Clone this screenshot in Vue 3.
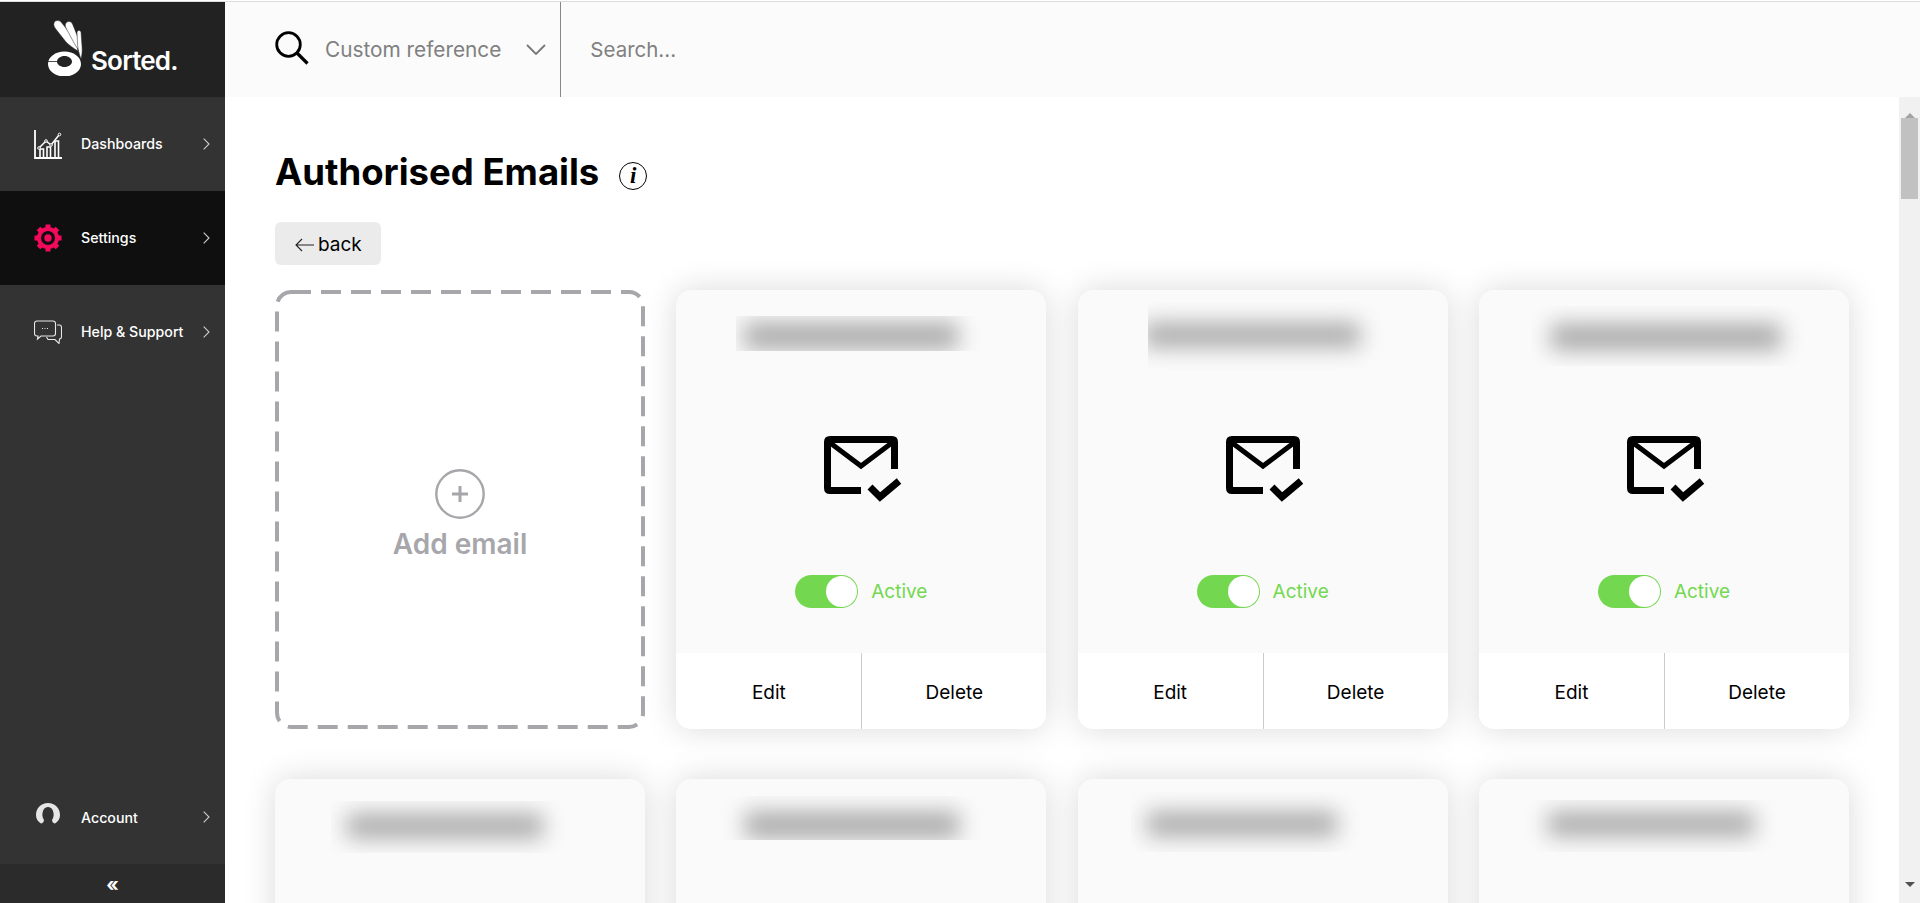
<template>
  <div class="topline"></div>
  <div class="shell">
    <aside class="sidebar">
      <div class="logo">
        <svg class="logo-mark" viewBox="0 0 36 58" width="36" height="58">
          <g fill="#fff" stroke="#222" stroke-width=".5">
            <path d="M6 5C7 2 11 2 13 4L26 20C28 24 29 28 30 33 25 30 21 27 18 24L7 10C6 8 5.500 7 6 5Z" />
            <path d="M18 5C20 3 23 3 24.500 6L31 22C32 26 32.500 30 32.500 34 29 30 27 27 25 23L18 10C17 8 17 6 18 5Z" />
            <path d="M29 14C30 12 32 12 33 14L34 28C34.500 33 34 37 33 41 31 36 30 31 29.500 26Z" />
          </g>
          <path
            d="M16.500 33.500C25.600 33.500 33 39 33 46S25.600 58.500 16.500 58.500 0 53 0 46 7.400 33.500 16.500 33.500ZM16.500 38C12.400 38 9 40.500 9 43.500S12.400 49 16.500 49 24 46.500 24 43.500 20.600 38 16.500 38Z"
            fill="#fff"
            fill-rule="evenodd"
          />
          <path d="M0 43.500h9" stroke="#222" stroke-width=".8" />
        </svg>
        <span class="logo-text">Sorted.</span>
      </div>

      <a v-for="item in navItems" :key="item.label" class="nav-item" :class="{ 'nav-item--active': item.active }">
        <span class="nav-icon">
          <svg v-if="item.icon === 'chart'" viewBox="0 0 28 29" width="28" height="29" fill="none" stroke="#fff">
            <path d="M1 0v28h27" stroke-width="1.800" />
            <path d="M6 27v-8h3.500v8M13 27v-10h3.500v10M21 27V11h3.500v16" stroke-width="1.600" />
            <path d="M5 18l7-7 5 4 8-10" stroke-width="1.500" />
            <circle cx="5" cy="18" r="1.300" fill="#333" />
            <circle cx="12" cy="11" r="1.300" fill="#333" />
            <circle cx="17" cy="15" r="1.300" fill="#333" />
            <circle cx="25.500" cy="4.500" r="1.300" fill="#333" />
          </svg>
          <svg v-else-if="item.icon === 'gear'" viewBox="0 0 28 28" width="28" height="28" fill="none" stroke="#f5095c">
            <circle cx="14" cy="14" r="9" stroke-width="4" />
            <path
              d="M14 0.500v5M14 22.500v5M0.500 14h5M22.500 14h5M4.500 4.500l3.500 3.500M20 20l3.500 3.500M23.500 4.500L20 8M8 20l-3.500 3.500"
              stroke-width="5"
            />
            <circle cx="14" cy="14" r="3.700" fill="#f5095c" stroke="none" />
          </svg>
          <svg v-else-if="item.icon === 'chat'" viewBox="0 0 28 24" width="28" height="24" fill="none" stroke="#e8e8e8" stroke-width="1.100">
            <path d="M3 1h16a2.500 2.500 0 0 1 2.500 2.500v10a2.500 2.500 0 0 1-2.500 2.500H7l-3.500 3 .5-3H3a2.500 2.500 0 0 1-2.500-2.500v-10A2.500 2.500 0 0 1 3 1Z" />
            <path d="M23 5h2.500c1 0 2 1 2 2.500v9c0 1.500-1 2.500-2 2.500l-.5 4.500-4-4h-7l-1.500-2.500" />
            <path d="M8 8.500h1M10.500 8.500h1M13 8.500h1" stroke-width="1.200" />
          </svg>
        </span>
        <span class="nav-label">{{ item.label }}</span>
        <svg class="nav-chevron" viewBox="0 0 7 12" width="7" height="12" fill="none" stroke="#ccc" stroke-width="1.100">
          <path d="M.7.7 6 6 .7 11.300" />
        </svg>
      </a>

      <div class="sidebar-spacer"></div>

      <a class="nav-item nav-item--account">
        <span class="nav-icon">
          <svg class="account-icon" viewBox="0 0 24 21" width="24" height="21">
            <path
              d="M5 20.500C1.500 18.500 0 15.500 0 12 0 5 5 0 12 0s12 5 12 12c0 3.500-1.500 6.500-5 8.500-1.500 0-2.800-1.500-3-3.500 2-3 2-6 1-9-1-3-3-4-5-4S8 5 7 8c-1 3-1 6 1 9-.2 2-1.500 3.500-3 3.500Z"
              fill="#e6e6e6"
            />
          </svg>
        </span>
        <span class="nav-label">Account</span>
        <svg class="nav-chevron" viewBox="0 0 7 12" width="7" height="12" fill="none" stroke="#ccc" stroke-width="1.100">
          <path d="M.7.7 6 6 .7 11.300" />
        </svg>
      </a>
      <div class="collapse">«</div>
    </aside>

    <div class="content">
      <header class="topbar">
        <svg class="search-icon" viewBox="0 0 34 34" width="34" height="34" fill="none" stroke="#000">
          <circle cx="13.500" cy="13.500" r="11.800" stroke-width="2.800" />
          <path d="M22 22 32.500 32.500" stroke-width="3.200" />
        </svg>
        <span class="search-type">Custom reference</span>
        <svg class="search-chevron" viewBox="0 0 20 11" width="20" height="11" fill="none" stroke="#777" stroke-width="1.800">
          <path d="M1 1l9 9 9-9" />
        </svg>
        <input class="search-input" type="text" placeholder="Search..." />
      </header>

      <div class="body">
        <main class="main">
          <div class="title-row">
            <h1>Authorised Emails</h1>
            <span class="info"><i>i</i></span>
          </div>
          <button class="back-btn">
            <svg viewBox="0 0 19 14" width="19" height="14" fill="none" stroke="#222" stroke-width="1.100">
              <path d="M19 7H1M7 1 1 7l6 6" />
            </svg>
            back
          </button>

          <div class="grid">
            <div class="add-card">
              <svg class="dash" width="100%" height="100%"><rect class="dash-rect" /></svg>
              <svg viewBox="0 0 50 50" width="50" height="50" fill="none" stroke="#a6a6ab">
                <circle cx="25" cy="25" r="23.700" stroke-width="2.400" />
                <path d="M25 17v16M17 25h16" stroke-width="3" />
              </svg>
              <span class="add-label">Add email</span>
            </div>

            <div v-for="card in cards" :key="card.id" class="card">
              <div class="card-head">
                <div class="blur-box" :style="rectStyle(card.box)">
                  <div class="blur-bar" :style="rectStyle(card.bar)"></div>
                </div>
              </div>
              <svg class="mail-icon" viewBox="-1 0 84 72" width="84" height="72" fill="none" stroke="#000">
                <path d="M41 58.500H10Q7.500 58.500 7.500 56V10Q7.500 7.500 10 7.500H72Q74.500 7.500 74.500 10V37" stroke-width="7" />
                <path d="M9 10 41 34 73 10" stroke-width="5" />
                <path d="M50 55 60 65 79 49" stroke-width="7" />
              </svg>
              <div class="status">
                <span class="toggle"><span class="knob"></span></span>
                <span class="status-label">Active</span>
              </div>
              <div class="card-actions">
                <button>Edit</button>
                <button>Delete</button>
              </div>
            </div>
          </div>
        </main>

        <div class="scrollbar">
          <span class="arrow arrow--up"></span>
          <span class="thumb"></span>
          <span class="scroll-gap"></span>
          <span class="arrow arrow--down"></span>
        </div>
      </div>
    </div>
  </div>
</template>

<script setup>
const navItems = [
  { label: "Dashboards", icon: "chart" },
  { label: "Settings", icon: "gear", active: true },
  { label: "Help & Support", icon: "chat" }
];

// emails are blurred out in the app, so each card only holds a smudge: [x, y, w, h]
const cards = [
  { id: 1, box: [60, 26, 251, 35], bar: [8, 7, 214, 26] },
  { id: 2, box: [70, 12, 247, 67], bar: [-4, 21, 216, 24] },
  { id: 3, box: [52, 16, 276, 60], bar: [20, 18, 230, 26] },
  { id: 4, box: [56, 22, 250, 52], bar: [16, 13, 196, 24] },
  { id: 5, box: [43, 17, 276, 44], bar: [26, 16, 214, 26] },
  { id: 6, box: [53, 13, 236, 60], bar: [16, 20, 190, 24] },
  { id: 7, box: [47, 21, 258, 52], bar: [22, 12, 206, 24] }
];

const rectStyle = ([x, y, w, h]) => ({
  marginLeft: `${x}px`,
  marginTop: `${y}px`,
  width: `${w}px`,
  height: `${h}px`
});
</script>

<style>
html,
body {
  margin: 0;
  background: #fff;
  overflow: hidden;
}
</style>

<style scoped>
.topline {
  box-sizing: border-box;
  height: 2px;
  background: #fff;
  border-bottom: 1px solid #ddd;
}

.shell {
  display: flex;
  height: 901px;
  font-family: Inter, "Liberation Sans", sans-serif;
  color: #000;
  overflow: hidden;
}

.sidebar {
  flex: 0 0 225px;
  display: flex;
  flex-direction: column;
  background: #333;
}

.logo {
  flex: 0 0 95px;
  box-sizing: border-box;
  display: flex;
  align-items: flex-end;
  gap: 7px;
  padding: 0 0 21px 48px;
  background: #222;
}

.logo-mark {
  flex: none;
}

.logo-text {
  color: #fff;
  font-size: 26px;
  font-weight: 600;
  letter-spacing: -0.8px;
  line-height: 30px;
}

.nav-item {
  flex: 0 0 94px;
  display: flex;
  align-items: center;
  padding: 0 15px 0 34px;
  color: #fff;
}

.nav-item--active {
  background: #0f0f0f;
}

.nav-icon {
  flex: 0 0 47px;
  display: flex;
  align-items: center;
}

.nav-icon svg {
  display: block;
}

.account-icon {
  margin: 0 0 8px 2px;
}

.nav-label {
  flex: 1;
  padding-bottom: 2px;
  font-size: 14.200px;
  font-weight: 500;
  white-space: nowrap;
}

.nav-item--account .nav-label {
  padding-bottom: 0;
}

.sidebar-spacer {
  flex: 1;
}

.collapse {
  flex: 0 0 39px;
  box-sizing: border-box;
  display: flex;
  align-items: center;
  justify-content: center;
  padding-top: 2px;
  background: #2b2b2b;
  color: #fff;
  font-size: 19px;
  font-weight: 700;
}

.content {
  flex: 1;
  min-width: 0;
  display: flex;
  flex-direction: column;
}

.topbar {
  flex: 0 0 95px;
  display: flex;
  align-items: center;
  padding-left: 50px;
  background: #fbfbfb;
}

.search-icon {
  flex: none;
  margin-bottom: 4px;
}

.search-type {
  margin-left: 16px;
  font-size: 20.800px;
  color: #808080;
  white-space: nowrap;
}

.search-chevron {
  margin-left: 25px;
}

.search-input {
  flex: 1;
  align-self: stretch;
  margin-left: 14px;
  padding: 0 0 0 29px;
  border: 0;
  border-left: 1px solid #888;
  outline: none;
  background: transparent;
  font-family: inherit;
  font-size: 20.500px;
  color: #333;
}

.search-input::placeholder {
  color: #808080;
  opacity: 1;
}

.body {
  flex: 1;
  min-height: 0;
  display: flex;
}

.main {
  flex: 1;
  min-width: 0;
  padding: 53px 50px 0;
  overflow: hidden;
}

.title-row {
  display: flex;
  align-items: center;
  gap: 20px;
  height: 44px;
}

h1 {
  margin: 0;
  font-size: 36.500px;
  font-weight: 700;
  line-height: 44px;
  white-space: nowrap;
}

.info {
  flex: none;
  display: flex;
  align-items: center;
  justify-content: center;
  box-sizing: border-box;
  width: 28px;
  height: 28px;
  margin-top: 8px;
  border: 1.500px solid #000;
  border-radius: 50%;
  font-family: "Liberation Serif", serif;
  font-size: 23px;
  font-weight: 700;
}

.back-btn {
  display: flex;
  align-items: center;
  gap: 4px;
  box-sizing: border-box;
  width: 106px;
  height: 43px;
  margin-top: 28px;
  padding: 2px 0 0 20px;
  border: 0;
  border-radius: 6px;
  background: #ebebeb;
  font-family: inherit;
  font-size: 19px;
  color: #000;
}

.grid {
  display: grid;
  grid-template-columns: repeat(4, 370px);
  justify-content: space-between;
  row-gap: 50px;
  margin-top: 25px;
}

.add-card {
  position: relative;
  display: flex;
  flex-direction: column;
  align-items: center;
  justify-content: center;
  gap: 8px;
  height: 439px;
  padding-top: 11px;
  box-sizing: border-box;
}

.dash {
  position: absolute;
  inset: 0;
}

.dash-rect {
  x: 2px;
  y: 2px;
  width: calc(100% - 4px);
  height: calc(100% - 4px);
  rx: 14px;
  fill: none;
  stroke: #a6a6ab;
  stroke-width: 4px;
  stroke-dasharray: 20 10;
}

.add-label {
  font-size: 28px;
  font-weight: 600;
  line-height: 34px;
  color: #a6a6ab;
}

.card {
  display: flex;
  flex-direction: column;
  align-items: center;
  height: 439px;
  background: #fafafa;
  border-radius: 15px;
  box-shadow: 0 0 32px rgba(0, 0, 0, 0.15);
  overflow: hidden;
}

.card-head {
  flex: 0 0 142px;
  align-self: stretch;
  display: flex;
  align-items: flex-start;
}

.blur-box {
  flex: none;
  display: flow-root;
  overflow: hidden;
}

.blur-bar {
  background: #a8a8a8;
  filter: blur(11px);
}

.mail-icon {
  flex: none;
  display: block;
}

.status {
  display: flex;
  align-items: center;
  gap: 13px;
  margin-top: 71px;
}

.toggle {
  display: flex;
  justify-content: flex-end;
  box-sizing: border-box;
  width: 63px;
  height: 33px;
  padding: 1px;
  border-radius: 17px;
  background: #73d84f;
}

.knob {
  width: 31px;
  height: 31px;
  border-radius: 50%;
  background: #fff;
}

.status-label {
  font-size: 19px;
  color: #73d84f;
}

.card-actions {
  margin-top: auto;
  flex: 0 0 76px;
  align-self: stretch;
  display: grid;
  grid-template-columns: 1fr 1fr;
  background: #fff;
}

.card-actions button {
  padding: 2px 0 0;
  border: 0;
  background: transparent;
  font-family: inherit;
  font-size: 19px;
  color: #000;
}

.card-actions button + button {
  border-left: 1px solid #ccc;
}

.scrollbar {
  flex: 0 0 21px;
  display: flex;
  flex-direction: column;
  align-items: center;
  background: #f1f1f1;
}

.arrow {
  flex: 0 0 21px;
  width: 0;
  height: 0;
  box-sizing: border-box;
  border-left: 5px solid transparent;
  border-right: 5px solid transparent;
}

.arrow--up {
  border-bottom: 5px solid #a3a3a3;
  border-top: 8px solid transparent;
}

.arrow--down {
  border-top: 5px solid #505050;
  border-bottom: 8px solid transparent;
  margin-top: 8px;
}

.thumb {
  flex: 0 0 81px;
  width: 17px;
  background: #c1c1c1;
}

.scroll-gap {
  flex: 1;
}
</style>
